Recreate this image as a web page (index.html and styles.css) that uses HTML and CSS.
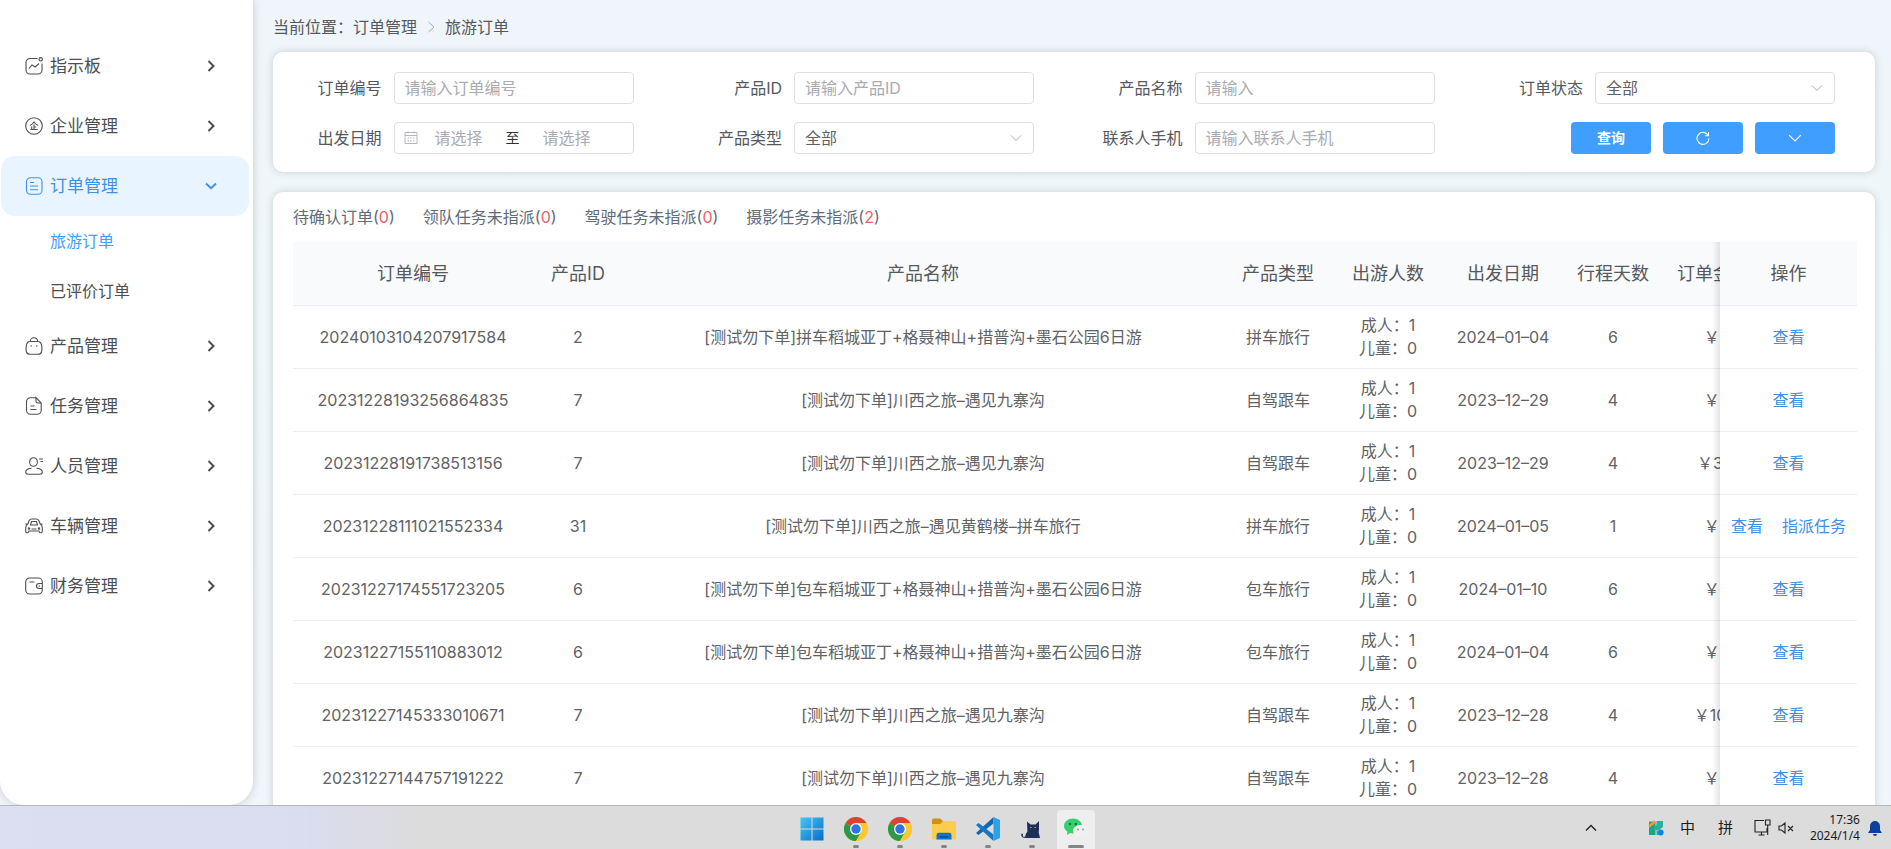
FILE: index.html
```html
<!DOCTYPE html>
<html lang="zh-CN">
<head>
<meta charset="utf-8">
<title>旅游订单</title>
<link rel="stylesheet" href="styles.css">
</head>
<body>
<svg class="defs" aria-hidden="true">
  <symbol id="chev-right" viewBox="0 0 12 12"><path d="M3.500 1 8.500 6l-5 5" fill="none" stroke="currentColor" stroke-width="2"/></symbol>
  <symbol id="chev-down" viewBox="0 0 12 12"><path d="M1 3.500 6 8.200l5-4.700" fill="none" stroke="currentColor" stroke-width="2"/></symbol>
  <symbol id="arrow-thin" viewBox="0 0 12 12"><path d="M1 3.500 6 8.500l5-5" fill="none" stroke="currentColor" stroke-width="1"/></symbol>
  <symbol id="chrome" viewBox="0 0 24 24">
    <circle cx="12" cy="12" r="12" fill="#fcc934"/>
    <path d="M12 12 1.600 6A12 12 0 0 1 22.400 6z" fill="#dd4034"/>
    <path d="M12 12 1.600 6A12 12 0 0 0 12 24l5.200-9z" fill="#2a9a48"/>
    <path d="M12 6h10.400A12 12 0 0 1 12 24l5.200-9z" fill="#fcc934"/>
    <circle cx="12" cy="12" r="6" fill="#fff"/><circle cx="12" cy="12" r="4.700" fill="#2f74e0"/>
  </symbol>
</svg>
<div class="app">
  <nav class="sidebar" aria-label="主菜单">
    <a class="menu" href="#"><svg class="mi" viewBox="0 0 18 18"><path d="M12.500 1.500H5A4 4 0 0 0 1 5.500V13a4 4 0 0 0 4 4h8a4 4 0 0 0 4-4V6.500M4 11.500l3-3.500 3.200 2L14 6.500"/><circle cx="15.700" cy="2.300" r="1.700"/></svg>指示板<svg class="chev"><use href="#chev-right"/></svg></a>
    <a class="menu" href="#"><svg class="mi" viewBox="0 0 18 18"><circle cx="9" cy="9" r="8.300"/><path d="M4.800 8.500C7 7.500 8 6.500 9 5c1 1.500 2 2.500 4.200 3.500M9 7.500v5M9 10h2.200M6.700 9.500v3M5.300 12.500h7.400"/></svg>企业管理<svg class="chev"><use href="#chev-right"/></svg></a>
    <a class="menu active" href="#"><svg class="mi" viewBox="0 0 18 18"><rect x="1.500" y=".7" width="15.500" height="16.600" rx="4"/><path d="M5 5.500h4M5 9h8M5 12.700h8"/></svg>订单管理<svg class="chev"><use href="#chev-down"/></svg></a>
    <a class="submenu current" href="#">旅游订单</a>
    <a class="submenu" href="#">已评价订单</a>
    <a class="menu" href="#"><svg class="mi" viewBox="0 0 18 18"><path d="M5 4.500h8c2.500 0 3.500 2 3.800 5s.2 4-.3 5.500-1.500 2.300-3.500 2.300H5c-2 0-3-.8-3.500-2.300s-.6-2.500-.3-5.500 1.300-5 3.800-5zM5.200 4.500a3.800 3.800 0 0 1 7.600 0M5.500 9h1.500M11 9h1.500"/></svg>产品管理<svg class="chev"><use href="#chev-right"/></svg></a>
    <a class="menu" href="#"><svg class="mi" viewBox="0 0 18 18"><path d="M11 .7H5.500a4 4 0 0 0-4 4v8.600a4 4 0 0 0 4 4h6.700a4 4 0 0 0 4-4V6L11 .7v3.500A1.800 1.800 0 0 0 12.800 6h3.400M5.500 9h4M5.500 12.500h6"/></svg>任务管理<svg class="chev"><use href="#chev-right"/></svg></a>
    <a class="menu" href="#"><svg class="mi" viewBox="0 0 18 18"><ellipse cx="8.500" cy="5" rx="3.900" ry="4.300"/><path d="M6.500 11.300c-3.500 0-6 2-5.800 4 .1 1.400 1 2 2.500 2h11.600c1.500 0 2.400-.6 2.500-2 .2-2-2.300-4-5.800-4M14 2h4M15.500 4.500H18"/></svg>人员管理<svg class="chev"><use href="#chev-right"/></svg></a>
    <a class="menu" href="#"><svg class="mi" viewBox="0 0 18 18"><path d="M2.800 7 4.200 3.500C4.700 2.300 5.500 2 7 2h4c1.500 0 2.300.3 2.800 1.500L15.200 7c1.500.7 2.100 2 2.100 4v3c0 1.200-.5 1.800-1.600 1.800-1 0-1.700-.6-1.700-1.800H4c0 1.200-.7 1.800-1.700 1.800C1.200 15.800.7 15.200.7 14v-3c0-2 .6-3.300 2.100-4zM5.500 8l1-3.500h5l1 3.500zM.5 7h1.800M15.700 7h1.800M6.500 12h5"/><circle cx="4" cy="11.500" r=".7"/><circle cx="14" cy="11.500" r=".7"/></svg>车辆管理<svg class="chev"><use href="#chev-right"/></svg></a>
    <a class="menu" href="#"><svg class="mi" viewBox="0 0 18 18"><path d="M17.300 6.500V5a4 4 0 0 0-4-4H4.700a4 4 0 0 0-4 4v8a4 4 0 0 0 4 4h8.600a4 4 0 0 0 4-4v-1.500M17.300 6.500H14a2.500 2.500 0 0 0 0 5h3.300zM4.500 5h5M13.500 9h1.500"/></svg>财务管理<svg class="chev"><use href="#chev-right"/></svg></a>
  </nav>
  <main class="main">
    <div class="crumbs"><span>当前位置：</span><a href="#">订单管理</a><svg class="sep" viewBox="0 0 12 12"><path d="M3.500 1 9 6l-5.500 5" fill="none" stroke="currentColor"/></svg><a href="#">旅游订单</a></div>
    <form class="card filters">
      <div class="field"><label for="no">订单编号</label><input class="ctl" id="no" type="text" placeholder="请输入订单编号"></div>
      <div class="field"><label for="pid">产品ID</label><input class="ctl" id="pid" type="text" placeholder="请输入产品ID"></div>
      <div class="field"><label for="pname">产品名称</label><input class="ctl" id="pname" type="text" placeholder="请输入"></div>
      <div class="field"><label for="status">订单状态</label><div class="select"><select class="ctl" id="status"><option>全部</option></select><svg class="drop"><use href="#arrow-thin"/></svg></div></div>
      <div class="field"><label for="from">出发日期</label><div class="ctl range"><svg class="cal" viewBox="0 0 14 14"><path d="M1 1.500h12v11H1zM1 4.500h12M4 .5v2M10 .5v2M3.500 7h1.500M6.200 7h1.600M9 7h1.500M3.500 9.800h1.500M6.200 9.800h1.600M9 9.800h1.500" fill="none" stroke="currentColor"/></svg><input id="from" type="text" placeholder="请选择"><span>至</span><input type="text" aria-label="结束日期" placeholder="请选择"></div></div>
      <div class="field"><label for="ptype">产品类型</label><div class="select"><select class="ctl" id="ptype"><option>全部</option></select><svg class="drop"><use href="#arrow-thin"/></svg></div></div>
      <div class="field"><label for="phone">联系人手机</label><input class="ctl" id="phone" type="text" placeholder="请输入联系人手机"></div>
      <div class="field"><button class="btn" type="button">查询</button><button class="btn" type="button" aria-label="重置"><svg viewBox="0 0 14 14"><path d="M12.300 4.500A6 6 0 1 0 13 7.500M12.500 1v3.700H9" fill="none" stroke="currentColor" stroke-width="1.100"/></svg></button><button class="btn" type="button" aria-label="展开"><svg viewBox="0 0 12 12"><use href="#arrow-thin"/></svg></button></div>
    </form>
    <section class="card orders">
      <div class="stats"><span>待确认订单(<b>0</b>)</span><span>领队任务未指派(<b>0</b>)</span><span>驾驶任务未指派(<b>0</b>)</span><span>摄影任务未指派(<b>2</b>)</span></div>
      <div class="scroll">
        <table>
          <colgroup><col class="w240"><col class="w90"><col><col class="w110"><col class="w110"><col class="w120"><col class="w100"><col class="w100"><col class="w137"></colgroup>
          <thead><tr><th>订单编号</th><th>产品ID</th><th>产品名称</th><th>产品类型</th><th>出游人数</th><th>出发日期</th><th>行程天数</th><th>订单金额</th><th class="fixed">操作</th></tr></thead>
          <tbody>
            <tr><td>20240103104207917584</td><td>2</td><td>[测试勿下单]拼车稻城亚丁+格聂神山+措普沟+墨石公园6日游</td><td>拼车旅行</td><td>成人：1<br>儿童：0</td><td>2024–01–04</td><td>6</td><td class="price">￥1</td><td class="fixed"><a href="#">查看</a></td></tr>
            <tr><td>20231228193256864835</td><td>7</td><td>[测试勿下单]川西之旅–遇见九寨沟</td><td>自驾跟车</td><td>成人：1<br>儿童：0</td><td>2023–12–29</td><td>4</td><td class="price">￥1</td><td class="fixed"><a href="#">查看</a></td></tr>
            <tr><td>20231228191738513156</td><td>7</td><td>[测试勿下单]川西之旅–遇见九寨沟</td><td>自驾跟车</td><td>成人：1<br>儿童：0</td><td>2023–12–29</td><td>4</td><td class="price">￥30</td><td class="fixed"><a href="#">查看</a></td></tr>
            <tr><td>20231228111021552334</td><td>31</td><td>[测试勿下单]川西之旅–遇见黄鹤楼–拼车旅行</td><td>拼车旅行</td><td>成人：1<br>儿童：0</td><td>2024–01–05</td><td>1</td><td class="price">￥1</td><td class="fixed"><a href="#">查看</a><a href="#">指派任务</a></td></tr>
            <tr><td>20231227174551723205</td><td>6</td><td>[测试勿下单]包车稻城亚丁+格聂神山+措普沟+墨石公园6日游</td><td>包车旅行</td><td>成人：1<br>儿童：0</td><td>2024–01–10</td><td>6</td><td class="price">￥1</td><td class="fixed"><a href="#">查看</a></td></tr>
            <tr><td>20231227155110883012</td><td>6</td><td>[测试勿下单]包车稻城亚丁+格聂神山+措普沟+墨石公园6日游</td><td>包车旅行</td><td>成人：1<br>儿童：0</td><td>2024–01–04</td><td>6</td><td class="price">￥1</td><td class="fixed"><a href="#">查看</a></td></tr>
            <tr><td>20231227145333010671</td><td>7</td><td>[测试勿下单]川西之旅–遇见九寨沟</td><td>自驾跟车</td><td>成人：1<br>儿童：0</td><td>2023–12–28</td><td>4</td><td class="price">￥100</td><td class="fixed"><a href="#">查看</a></td></tr>
            <tr><td>20231227144757191222</td><td>7</td><td>[测试勿下单]川西之旅–遇见九寨沟</td><td>自驾跟车</td><td>成人：1<br>儿童：0</td><td>2023–12–28</td><td>4</td><td class="price">￥1</td><td class="fixed"><a href="#">查看</a></td></tr>
          </tbody>
        </table>
      </div>
    </section>
  </main>
</div>
<footer class="taskbar">
  <div class="apps">
    <button class="task" type="button" aria-label="开始"><svg viewBox="0 0 24 24"><defs><linearGradient id="win" x2="1" y2="1"><stop offset="0" stop-color="#45c6f5"/><stop offset="1" stop-color="#0a6cc8"/></linearGradient></defs><path d="M.5.5h11v11H.5zM12.500.5h11v11h-11zM.5 12.500h11v11H.5zM12.500 12.500h11v11h-11z" fill="url(#win)"/></svg></button>
    <button class="task open" type="button" aria-label="Chrome"><svg><use href="#chrome"/></svg></button>
    <button class="task open" type="button" aria-label="Chrome"><svg><use href="#chrome"/></svg></button>
    <button class="task open" type="button" aria-label="文件资源管理器"><svg viewBox="0 0 24 24"><path d="M0 3q0-1.500 1.500-1.500H8L11 4v4H0z" fill="#d0920f"/><path d="M0 7h8.500L11 4h11.500Q24 4 24 5.500V21q0 1.500-1.500 1.500h-21Q0 22.500 0 21z" fill="#fccd4d"/><path d="M4.500 22.500V18q0-2.200 2.200-2.200h10.600q2.200 0 2.200 2.200v4.500z" fill="#1475c4"/><path d="M7.500 20h9" stroke="#0c5291" stroke-width="1.500"/></svg></button>
    <button class="task open" type="button" aria-label="VS Code"><svg viewBox="0 0 24 24"><path d="M17.500 0v6.500L2.500 18 0 16z" fill="#0f68b3"/><path d="m0 8 2.500-2 15 11.500V24z" fill="#1479c4"/><path d="m17.500 0 6.500 3v18l-6.500 3z" fill="#2ca2ea"/></svg></button>
    <button class="task open" type="button" aria-label="Clash"><svg viewBox="0 0 24 24"><path d="M7 4.500 10.500 7.500h5L19 4v8.500l-.3 3L20 21H6C2.500 21 1 19.500 1.200 17.500c.2-1.300 1.700-1.300 1.800 0 .1 1-.6 1.400 0 2 .6.500 1.300.4 2.200.2.300-2.200 1-3.700 2.200-4.900z" fill="#1d2f56"/><path d="M10.200 10.500h1.300M14.500 10.500h1.300" stroke="#dce2ec" stroke-width=".8"/></svg></button>
    <button class="task open focus" type="button" aria-label="微信"><svg viewBox="0 0 24 24"><path d="M9 1.500c5 0 9 3.200 9 7.500s-4 7.500-9 7.500c-1 0-2-.1-2.800-.4L2.800 18l.7-3.300C1.300 13.300 0 11.300 0 9c0-4.300 4-7.500 9-7.500z" fill="#35cf6c"/><circle cx="6" cy="7" r="1.200" fill="#176c3a"/><circle cx="11.800" cy="7" r="1.200" fill="#176c3a"/><path d="M16.500 8c4.200 0 7.500 2.500 7.500 5.800 0 1.700-.9 3.200-2.300 4.300l.4 2.400-2.600-1.400c-.9.300-1.900.4-3 .4-4.200 0-7.500-2.500-7.500-5.700S12.300 8 16.500 8z" fill="#eef1ef"/><circle cx="14" cy="12.500" r=".9" fill="#8b8f8d"/><circle cx="19" cy="12.500" r=".9" fill="#8b8f8d"/></svg></button>
  </div>
  <div class="tray">
    <svg class="t12" viewBox="0 0 12 12"><path d="m1 8.500 5-5 5 5" fill="none" stroke="#222" stroke-width="1.400"/></svg>
    <svg class="t16 gap" viewBox="0 0 16 16"><path d="M1 1.500h6.500V8H1zM1 8h6.500v7H1z" fill="#1ea28a"/><path d="M8.500 1H15v6l-4 3H6V7l2.500-2z" fill="#27b29b"/><path d="m1 6.500 6-5" stroke="#e9a02b" stroke-width="2.400"/><path d="M8.500 9.500 11 12v3H8.500z" fill="#27b29b"/><circle cx="12.700" cy="12.500" r="2.900" fill="#1f7fe0"/></svg>
    <span>中</span><span class="pin">拼</span>
    <svg class="t17" viewBox="0 0 17 17"><path d="M10 1.500H1v11.500h12V9M4.500 16h6M7.500 13v3M11.500 1h4.500v5h-4.500zM13.700 6v10" fill="none" stroke="#222" stroke-width="1.100"/></svg>
    <svg class="t16" viewBox="0 0 16 16"><path d="M1 6v4h2.500L7 13V3L3.500 6zM10 6l5 5M15 6l-5 5" fill="none" stroke="#222" stroke-width="1.100"/></svg>
    <time datetime="2024-01-04T17:36">17:36<br>2024/1/4</time>
    <svg class="bell" viewBox="0 0 14 16"><path d="M7 1a5 5 0 0 1 5 5v4l2 3H0l2-3V6a5 5 0 0 1 5-5zM5 14h4a2 2 0 0 1-4 0z" fill="#0b419c"/></svg>
  </div>
</footer>
</body>
</html>
```
FILE: styles.css
```css
* { box-sizing: border-box; }
body {
  margin: 0;
  height: 100vh;
  display: flex;
  flex-direction: column;
  overflow: hidden;
  font: 16px/24px Inter, "Noto Sans CJK SC", sans-serif;
  color: #606266;
  background: linear-gradient(#eff5fa, #eef7f9 30%, #f0f6fb);
}
a { color: inherit; text-decoration: none; }
.defs { position: absolute; width: 0; height: 0; }

.app { flex: 1; min-height: 0; display: flex; overflow: hidden; }
.sidebar {
  flex: 0 0 253px;
  padding: 36px 4px 0 1px;
  background: #fff;
  border-radius: 0 0 24px 24px;
  box-shadow: 0 0 10px rgba(0, 0, 0, .18);
}
.menu {
  display: flex;
  align-items: center;
  height: 60px;
  padding: 0 32px 0 24px;
  border-radius: 14px;
  font-size: 17px;
  color: #4c4e52;
}
.menu.active { background: #e8f4ff; color: #4090e6; }
.mi { width: 18px; height: 18px; margin-right: 7px; fill: none; stroke: currentColor; stroke-width: 1.1; overflow: visible; }
.chev { width: 12px; height: 12px; margin-left: auto; }
.submenu { display: flex; align-items: center; height: 50px; padding-left: 49px; color: #4c4e52; }
.submenu.current { color: #409eff; }

.main { flex: 1; min-width: 0; padding: 0 16px 0 20px; }
.crumbs { display: flex; align-items: center; height: 52px; padding-top: 2px; color: #55585d; }
.sep { width: 12px; height: 12px; margin: 0 8px; color: #a8abb2; }
.card { background: #fff; border-radius: 10px; box-shadow: 0 0 8px rgba(0, 0, 0, .16); }
.filters { display: grid; grid-template-columns: repeat(4, 1fr); row-gap: 18px; padding: 20px 0 18px; }
.field { display: flex; align-items: center; justify-content: flex-end; gap: 12px; padding-right: 40px; color: #55585d; }
.ctl {
  width: 240px;
  height: 32px;
  padding: 0 10px;
  border: 1px solid #dcdfe6;
  border-radius: 4px;
  background: #fff;
  font: inherit;
  color: #606266;
  appearance: none;
}
input::placeholder { color: #a8abb2; opacity: 1; }
.select { position: relative; }
.select .ctl { display: block; }
.drop { position: absolute; right: 12px; top: 10px; width: 12px; height: 12px; color: #a8abb2; pointer-events: none; }
.range { display: flex; align-items: center; padding: 0 9px; color: #303133; }
.range input { width: 82px; height: 24px; padding: 0; border: 0; font: inherit; text-align: center; background: none; }
.range span { width: 26px; text-align: center; font-size: 14px; }
.cal { width: 14px; height: 14px; color: #b4b7bd; }
.btn {
  display: flex;
  align-items: center;
  justify-content: center;
  width: 80px;
  height: 32px;
  padding: 0;
  border: 0;
  border-radius: 4px;
  background: #409eff;
  color: #fff;
  font: bold 14px/20px Inter, "Noto Sans CJK SC", sans-serif;
}
.btn svg { width: 14px; height: 14px; }

.orders { margin-top: 20px; padding: 13px 18px 20px 20px; }
.stats { display: flex; gap: 28px; margin-bottom: 13px; color: #606b78; }
.stats b { font-weight: 400; color: #e8606a; }
.scroll { overflow-x: auto; }
table { width: 100%; min-width: 1607px; table-layout: fixed; border-collapse: separate; border-spacing: 0; text-align: center; }
.w240 { width: 240px; }
.w90 { width: 90px; }
.w100 { width: 100px; }
.w110 { width: 110px; }
.w120 { width: 120px; }
.w137 { width: 137px; }
th, td { height: 63px; padding: 0; border-bottom: 1px solid #ebeef2; white-space: nowrap; }
th { height: 64px; background: #f9fafc; font-size: 18px; font-weight: 400; color: #55585d; }
td { background: #fff; line-height: 23px; }
.price { padding-left: 4px; }
.fixed { position: sticky; right: 0; }
.fixed::before {
  content: "";
  position: absolute;
  top: 0;
  bottom: -1px;
  left: -8px;
  width: 8px;
  background: linear-gradient(90deg, rgba(0, 0, 0, 0), rgba(0, 0, 0, .1));
}
.fixed a { color: #4090e6; }
.fixed a + a { margin-left: 19px; }

.taskbar {
  display: grid;
  grid-template-columns: 1fr auto 1fr;
  height: 44px;
  border-top: 1px solid #b4b6b8;
  background: linear-gradient(90deg, #dcdff2, #dadcf0 300px, #dcdcdc 420px);
}
.apps { grid-column: 2; display: flex; gap: 6px; padding-right: 3px; }
.task {
  display: flex;
  flex-direction: column;
  align-items: center;
  width: 38px;
  height: 39px;
  margin-top: 4px;
  padding: 7px 0 0;
  border: 0;
  border-radius: 4px 4px 0 0;
  background: none;
}
.task svg { width: 24px; height: 24px; flex: none; }
.open::after { content: ""; width: 6px; height: 3px; margin-top: 4px; border-radius: 2px; background: #858585; }
.focus { background: #eeeeee; }
.focus::after { width: 16px; }
.tray { display: flex; align-items: center; justify-content: flex-end; padding-right: 9px; color: #1b1b1b; font-size: 15px; }
.t12 { width: 12px; height: 12px; }
.t16 { width: 16px; height: 16px; }
.t17 { width: 17px; height: 17px; margin: 0 7px 0 21px; }
.gap { margin: 0 16px 0 51px; }
.pin { margin-left: 23px; }
.tray time { width: 66px; font: 12px/16px "Noto Sans", sans-serif; text-align: right; }
.bell { width: 14px; height: 16px; margin-left: 8px; }
```
